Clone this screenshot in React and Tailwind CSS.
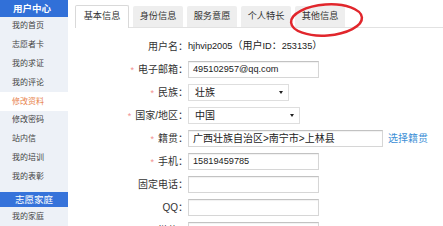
import React from "react";

const Req = () => (
  <span className="text-[#f19191] mr-[4px] text-[9px] font-['Liberation_Sans',sans-serif]">*</span>
);

const Lat = ({ children }) => (
  <span className="text-[9.2px] font-['Liberation_Sans',sans-serif]">{children}</span>
);

function Row({ label, req, children }) {
  return (
    <div className="grid grid-cols-[113px_1fr] items-center h-[23px]">
      <div className="text-right text-[#333] whitespace-nowrap">
        {req && <Req />}
        {label}：
      </div>
      <div className="flex items-center whitespace-nowrap">{children}</div>
    </div>
  );
}

const Input = ({ w, children }) => (
  <div
    className={`h-[17px] border border-[#d6d6d6] border-t-[#c2c2c2] bg-white flex items-center pl-[4px] text-[#222] shadow-[inset_0_1px_1px_rgba(0,0,0,0.06)] ${w}`}
  >
    {children}
  </div>
);

const Select = ({ w, children }) => (
  <div
    className={`h-[17px] border border-[#dedede] bg-white flex items-center justify-between pl-[6px] pr-[5px] text-[#222] ${w}`}
  >
    <span>{children}</span>
    <span className="w-0 h-0 border-l-[2.5px] border-r-[2.5px] border-t-[3px] border-l-transparent border-r-transparent border-t-[#222]" />
  </div>
);

const sideItems = [
  "我的首页",
  "志愿者卡",
  "我的求证",
  "我的评论",
  "修改资料",
  "修改密码",
  "站内信",
  "我的培训",
  "我的表彰",
];

export default function App() {
  return (
    <div className="relative w-[443px] h-[226px] overflow-hidden bg-white flex font-['Liberation_Sans','Noto_Sans_CJK_SC',sans-serif] text-[10px] leading-none">
      {/* Sidebar */}
      <div className="w-[68px] shrink-0 bg-[#edf1f7] flex flex-col">
        <div className="h-[17px] bg-[#3170d8] text-white font-bold text-[9.5px] flex items-center justify-center pr-[4px]">
          用户中心
        </div>
        {sideItems.map((t) => (
          <div
            key={t}
            className={
              t === "修改资料"
                ? "h-[19.4px] flex items-center pl-[12px] text-[8px] bg-white text-[#e8834e]"
                : "h-[19.4px] flex items-center pl-[12px] text-[8px] text-[#444]"
            }
          >
            {t}
          </div>
        ))}
        <div className="mt-[5px] h-[16px] bg-[#3673da] text-white text-[9.5px] flex items-center justify-center">
          志愿家庭
        </div>
        <div className="h-[19.4px] flex items-center pl-[12px] text-[8px] text-[#444]">
          我的家庭
        </div>
      </div>

      {/* Content */}
      <div className="flex-1 flex flex-col pl-[7px] pt-[5px]">
        {/* Tabs */}
        <div className="flex items-end gap-[4px] border-b border-[#e2e2e2] h-[23px] text-[9.2px] text-[#333]">
          <div className="w-[54px] h-[23px] -mb-px bg-white border border-b-0 border-[#d9d9d9] rounded-t-[2px] flex items-center justify-center">
            基本信息
          </div>
          <div className="w-[50px] h-[21px] bg-[#eeeeee] rounded-t-[2px] flex items-center justify-center">
            身份信息
          </div>
          <div className="w-[50px] h-[21px] bg-[#eeeeee] rounded-t-[2px] flex items-center justify-center">
            服务意愿
          </div>
          <div className="w-[50px] h-[21px] bg-[#eeeeee] rounded-t-[2px] flex items-center justify-center">
            个人特长
          </div>
          <div className="w-[50px] h-[21px] bg-[#eeeeee] rounded-t-[2px] flex items-center justify-center">
            其他信息
          </div>
        </div>

        {/* Form */}
        <div className="pt-[7px] flex flex-col">
          <Row label="用户名">
            <span className="text-[#222]">
              <Lat>hjhvip2005</Lat>（用户<Lat>ID</Lat>：<Lat>253135</Lat>）
            </span>
          </Row>
          <Row label="电子邮箱" req>
            <Input w="w-[131px]">
              <Lat>495102957@qq.com</Lat>
            </Input>
          </Row>
          <Row label="民族" req>
            <Select w="w-[101px]">壮族</Select>
          </Row>
          <Row label="国家/地区" req>
            <Select w="w-[112px]">中国</Select>
          </Row>
          <Row label="籍贯" req>
            <Input w="w-[195px]">广西壮族自治区&gt;南宁市&gt;上林县</Input>
            <span className="ml-[5px] text-[#3d8fd6]">选择籍贯</span>
          </Row>
          <Row label="手机" req>
            <Input w="w-[131px]">
              <Lat>15819459785</Lat>
            </Input>
          </Row>
          <Row label="固定电话">
            <Input w="w-[131px]" />
          </Row>
          <Row label="QQ">
            <Input w="w-[131px]" />
          </Row>
          <Row label="微信">
            <Input w="w-[131px]" />
          </Row>
        </div>
      </div>

      {/* Red annotation ellipse */}
      <svg
        className="absolute left-[287px] top-[1px] pointer-events-none"
        width="80"
        height="40"
        viewBox="0 0 80 40"
      >
        <ellipse
          cx="39.5"
          cy="19"
          rx="35.5"
          ry="15.5"
          transform="rotate(-4 39.5 19)"
          fill="none"
          stroke="#e1262c"
          strokeWidth="2.5"
        />
      </svg>
    </div>
  );
}
